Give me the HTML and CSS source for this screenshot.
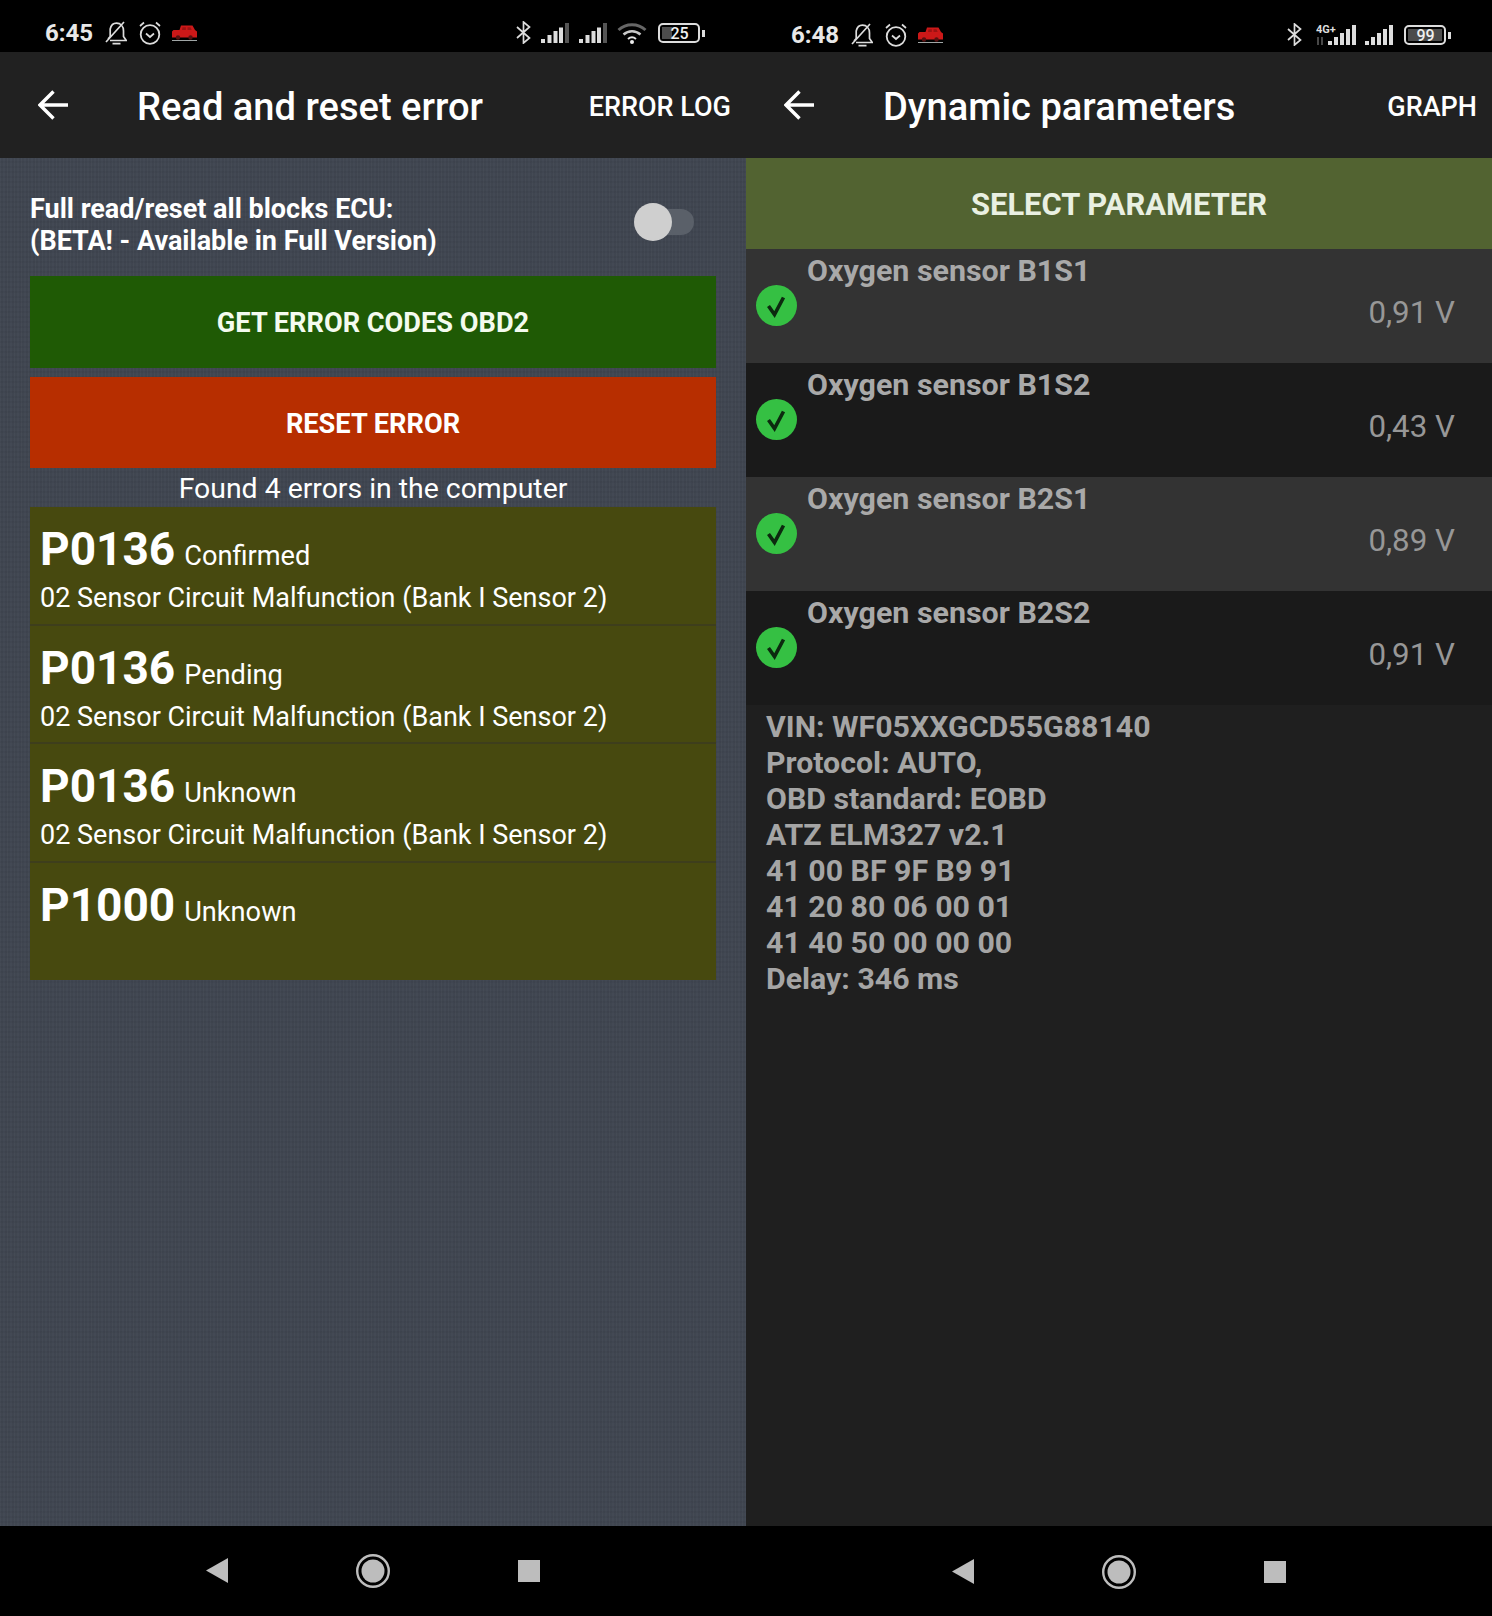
FILE: index.html
```html
<!DOCTYPE html>
<html lang="en">
<head>
<meta charset="utf-8">
<title>OBD screens</title>
<link rel="stylesheet" href="styles.css">
</head>
<body>
<svg class="sprite" aria-hidden="true">
  <symbol id="bell" viewBox="0 0 22 24"><path d="M1 21 19 1M5 19.500H21.300L18.500 15.500V10C18.500 5 15.500 2.200 11.500 2.200 8.500 2.200 6 4.500 5.200 8V15.500L3 18M7.500 22.700h8" fill="none" stroke="currentColor" stroke-width="1.700"/></symbol>
  <symbol id="alarm" viewBox="0 0 22 24"><circle cx="11" cy="13.500" r="9.300" fill="none" stroke="currentColor" stroke-width="1.800"/><path d="M7 12.500l4 3.500 4-3.500M1 5 5 1.500M21 5 17 1.500" fill="none" stroke="currentColor" stroke-width="1.700"/></symbol>
  <symbol id="car" viewBox="0 0 25 16"><path d="M0 6.500 1.500 5H7.500L9 .5h11.500L23 5l2 1.500V12.500H0z" fill="#cc1818"/><path d="M10.500 2.200h3.300v2.800H10zM15.500 2.200h3l1.200 2.800h-4.200z" fill="#9c1212"/><circle cx="6" cy="12.500" r="2.200" fill="#5a1010"/><circle cx="18.500" cy="12.500" r="2.200" fill="#5a1010"/><path d="M0 15.500h25" stroke="#a0a6a6" stroke-width="1"/></symbol>
  <symbol id="bt" viewBox="0 0 15 23"><path d="M1 6l12.500 11L7.500 22V1l6 5L1 17" fill="none" stroke="currentColor" stroke-width="1.700"/></symbol>
  <symbol id="wifi" viewBox="0 0 30 22"><path d="M1.500 8C9 1 21 1 28.500 8" fill="none" stroke="#666" stroke-width="3"/><path d="M6.500 12.500C11.500 8 18.500 8 23.500 12.500" fill="none" stroke="#c8c8c8" stroke-width="2.500"/><path d="M11 17c2.400-2 5.600-2 8 0" fill="none" stroke="#e4e4e4" stroke-width="2"/><circle cx="15" cy="20" r="2" fill="#eee"/></symbol>
</svg>

<main class="screens">
  <section class="screen screen-errors">
    <header class="status">
      <div class="status-left">
        <span class="time">6:45</span>
        <svg class="ic ic-bell"><use href="#bell"/></svg>
        <svg class="ic ic-alarm"><use href="#alarm"/></svg>
        <svg class="ic ic-car"><use href="#car"/></svg>
      </div>
      <div class="status-right">
        <svg class="ic ic-bt"><use href="#bt"/></svg>
        <svg class="ic ic-sig" viewBox="0 0 28 20"><rect x="0" y="16" width="4" height="4" fill="#ddd"/><rect x="6.500" y="12" width="4" height="8" fill="#ddd"/><rect x="12.500" y="8" width="4" height="12" fill="#ddd"/><rect x="18" y="4.500" width="4" height="15.500" fill="#ddd"/><rect x="24" y="0" width="4" height="20" fill="#555"/></svg>
        <svg class="ic ic-sig" viewBox="0 0 28 20"><rect x="0" y="16" width="4" height="4" fill="#ddd"/><rect x="6.500" y="12" width="4" height="8" fill="#ddd"/><rect x="12.500" y="8" width="4" height="12" fill="#ddd"/><rect x="18" y="4.500" width="4" height="15.500" fill="#ddd"/><rect x="24" y="0" width="4" height="20" fill="#555"/></svg>
        <svg class="ic ic-wifi"><use href="#wifi"/></svg>
        <svg class="ic ic-batt" viewBox="0 0 47 20"><rect x="1" y="1" width="40" height="18" rx="4" fill="none" stroke="#ddd" stroke-width="2"/><rect x="4" y="4" width="10" height="12" fill="#4c4c4c"/><rect x="44" y="7" width="3" height="7" fill="#ddd"/><text x="21.500" y="15.500" text-anchor="middle" class="batt-num">25</text></svg>
      </div>
    </header>
    <div class="appbar">
      <svg class="back" viewBox="0 0 31 30"><path d="M30 15H2.500M15.500 1.500 2 15l13.500 13.500" fill="none" stroke="#fff" stroke-width="3.400"/></svg>
      <h1 class="title">Read and reset error</h1>
      <span class="action">ERROR LOG</span>
    </div>
    <div class="content textured">
      <div class="toggle-row">
        <p class="toggle-label">Full read/reset all blocks ECU:<br>(BETA! - Available in Full Version)</p>
        <span class="switch"><span class="thumb"></span></span>
      </div>
      <button class="btn btn-green">GET ERROR CODES OBD2</button>
      <button class="btn btn-red">RESET ERROR</button>
      <p class="found">Found 4 errors in the computer</p>
      <ul class="errors">
        <li class="err"><div class="err-head"><b class="code">P0136</b> <span class="state">Confirmed</span></div><div class="desc">02 Sensor Circuit Malfunction (Bank I Sensor 2)</div></li>
        <li class="err"><div class="err-head"><b class="code">P0136</b> <span class="state">Pending</span></div><div class="desc">02 Sensor Circuit Malfunction (Bank I Sensor 2)</div></li>
        <li class="err"><div class="err-head"><b class="code">P0136</b> <span class="state">Unknown</span></div><div class="desc">02 Sensor Circuit Malfunction (Bank I Sensor 2)</div></li>
        <li class="err"><div class="err-head"><b class="code">P1000</b> <span class="state">Unknown</span></div></li>
      </ul>
    </div>
    <nav class="navbar">
      <svg class="nav-back" viewBox="0 0 22 25"><path d="M22 0v25L0 12.500z" fill="#bdbdbd"/></svg>
      <svg class="nav-home" viewBox="0 0 34 34"><circle cx="17" cy="17" r="15.800" fill="none" stroke="#bdbdbd" stroke-width="2.400"/><circle cx="17" cy="17" r="11.500" fill="#bdbdbd"/></svg>
      <span class="nav-square"></span>
    </nav>
  </section>

  <section class="screen screen-params">
    <header class="status status-low">
      <div class="status-left">
        <span class="time">6:48</span>
        <svg class="ic ic-bell"><use href="#bell"/></svg>
        <svg class="ic ic-alarm"><use href="#alarm"/></svg>
        <svg class="ic ic-car"><use href="#car"/></svg>
      </div>
      <div class="status-right">
        <svg class="ic ic-bt ic-bt-far"><use href="#bt"/></svg>
        <svg class="ic ic-sig4g" viewBox="0 0 40 22"><text x="0" y="9" class="net-num">4G+</text><path d="M2 13v8M6 13v8" stroke="#777" stroke-width="1.200"/><rect x="12" y="17" width="4" height="4" fill="#ddd"/><rect x="18" y="13" width="4" height="8" fill="#ddd"/><rect x="24" y="9" width="4" height="12" fill="#ddd"/><rect x="30" y="5" width="4" height="16" fill="#ddd"/><rect x="36" y="1" width="4" height="20" fill="#ddd"/></svg>
        <svg class="ic ic-sig" viewBox="0 0 28 20"><rect x="0" y="16" width="4" height="4" fill="#ddd"/><rect x="6" y="12" width="4" height="8" fill="#ddd"/><rect x="12" y="8" width="4" height="12" fill="#ddd"/><rect x="18" y="4" width="4" height="16" fill="#ddd"/><rect x="24" y="0" width="4" height="20" fill="#ddd"/></svg>
        <svg class="ic ic-batt" viewBox="0 0 47 20"><rect x="1" y="1" width="40" height="18" rx="4" fill="none" stroke="#ddd" stroke-width="2"/><rect x="4" y="4" width="34" height="12" fill="#4c4c4c"/><rect x="44" y="7" width="3" height="7" fill="#ddd"/><text x="21.500" y="15.500" text-anchor="middle" class="batt-num">99</text></svg>
      </div>
    </header>
    <div class="appbar">
      <svg class="back" viewBox="0 0 31 30"><path d="M30 15H2.500M15.500 1.500 2 15l13.500 13.500" fill="none" stroke="#fff" stroke-width="3.400"/></svg>
      <h1 class="title">Dynamic parameters</h1>
      <span class="action">GRAPH</span>
    </div>
    <div class="content plain">
      <div class="select">SELECT PARAMETER</div>
      <ul class="params">
        <li class="param"><svg class="check" viewBox="0 0 41 41"><circle cx="20.500" cy="20.500" r="20.500" fill="#35c043"/><path d="M12.500 21l6 8.500 9-17" fill="none" stroke="#0c2a0f" stroke-width="3.600"/></svg><div class="param-body"><div class="param-name">Oxygen sensor B1S1</div><div class="param-val">0,91 V</div></div></li>
        <li class="param"><svg class="check" viewBox="0 0 41 41"><circle cx="20.500" cy="20.500" r="20.500" fill="#35c043"/><path d="M12.500 21l6 8.500 9-17" fill="none" stroke="#0c2a0f" stroke-width="3.600"/></svg><div class="param-body"><div class="param-name">Oxygen sensor B1S2</div><div class="param-val">0,43 V</div></div></li>
        <li class="param"><svg class="check" viewBox="0 0 41 41"><circle cx="20.500" cy="20.500" r="20.500" fill="#35c043"/><path d="M12.500 21l6 8.500 9-17" fill="none" stroke="#0c2a0f" stroke-width="3.600"/></svg><div class="param-body"><div class="param-name">Oxygen sensor B2S1</div><div class="param-val">0,89 V</div></div></li>
        <li class="param"><svg class="check" viewBox="0 0 41 41"><circle cx="20.500" cy="20.500" r="20.500" fill="#35c043"/><path d="M12.500 21l6 8.500 9-17" fill="none" stroke="#0c2a0f" stroke-width="3.600"/></svg><div class="param-body"><div class="param-name">Oxygen sensor B2S2</div><div class="param-val">0,91 V</div></div></li>
      </ul>
      <p class="info">VIN: WF05XXGCD55G88140<br>Protocol: AUTO,<br>OBD standard: EOBD<br>ATZ ELM327 v2.1<br>41 00 BF 9F B9 91<br>41 20 80 06 00 01<br>41 40 50 00 00 00<br>Delay: 346 ms</p>
    </div>
    <nav class="navbar navbar-low">
      <svg class="nav-back" viewBox="0 0 22 25"><path d="M22 0v25L0 12.500z" fill="#bdbdbd"/></svg>
      <svg class="nav-home" viewBox="0 0 34 34"><circle cx="17" cy="17" r="15.800" fill="none" stroke="#bdbdbd" stroke-width="2.400"/><circle cx="17" cy="17" r="11.500" fill="#bdbdbd"/></svg>
      <span class="nav-square"></span>
    </nav>
  </section>
</main>
</body>
</html>
```
FILE: styles.css
```css
* { box-sizing: border-box; }
html, body { margin: 0; padding: 0; background: #000; }
body { font-family: Roboto, "Liberation Sans", sans-serif; color: #fff; }
p, h1, ul { margin: 0; padding: 0; }
ul { list-style: none; }
.sprite { width: 0; height: 0; position: absolute; }

.screens { display: flex; width: 1492px; height: 1616px; overflow: hidden; }
.screen { width: 746px; height: 1616px; display: flex; flex-direction: column; }

.status { height: 52px; background: #000; display: flex; align-items: center; justify-content: space-between; padding: 13px 41px 0 45px; flex: none; color: #ddd; }
.status-low { padding-top: 17px; }
.status-left, .status-right { display: flex; align-items: center; }
.time { font-size: 24px; font-weight: 700; color: #e8e8e8; width: 47px; line-height: 28px; white-space: nowrap; }
.ic { display: block; flex: none; }
.ic-bell { width: 22px; height: 24px; margin-left: 13px; }
.ic-alarm { width: 22px; height: 24px; margin-left: 12px; }
.ic-car { width: 25px; height: 16px; margin-left: 11px; }
.ic-bt { width: 15px; height: 23px; }
.ic-sig { width: 28px; height: 20px; margin-left: 10px; }
.ic-wifi { width: 30px; height: 22px; margin-left: 10px; }
.ic-batt { width: 47px; height: 20px; margin-left: 11px; }
.ic-sig4g { width: 40px; height: 22px; margin-left: 14px; }
.ic-sig4g + .ic-sig { margin-left: 9px; }
.batt-num { font: 500 16px Roboto, sans-serif; fill: #f0f0f0; }
.net-num { font: 700 11px Roboto, sans-serif; fill: #ddd; }

.appbar { height: 106px; background: #212121; display: flex; align-items: center; padding: 0 15px 0 38px; flex: none; }
.back { width: 31px; height: 30px; flex: none; }
.title { font-size: 38.100px; font-weight: 500; line-height: 44px; margin-left: 68px; margin-top: 4px; flex: 1; white-space: nowrap; }
.action { font-size: 27px; font-weight: 500; line-height: 32px; margin-top: 4px; white-space: nowrap; }

.content { flex: 1; min-height: 0; }
.textured {
  padding: 34px 30px 0 30px;
  background-color: #3f4550;
  background-image:
    repeating-linear-gradient(90deg, rgba(255,255,255,.018) 0 1px, rgba(0,0,0,.02) 1px 3px, rgba(255,255,255,.01) 3px 5px, rgba(0,0,0,.025) 5px 7px),
    repeating-linear-gradient(0deg, rgba(255,255,255,.012) 0 3px, rgba(0,0,0,.012) 3px 5px);
}
.plain { background: #1f1f1f; }

.toggle-row { display: flex; justify-content: space-between; align-items: flex-start; height: 84px; }
.toggle-label { font-size: 27px; font-weight: 700; line-height: 32px; margin-top: 1px; white-space: nowrap; }
.switch { position: relative; display: block; width: 60px; height: 26px; margin: 17px 22px 0 0; background: #5a6069; border-radius: 13px; }
.thumb { position: absolute; left: 0; top: -6px; width: 38px; height: 38px; border-radius: 50%; background: #cfcfcf; }

.btn { display: block; width: 100%; border: 0; color: #f4fbef; font: 700 27.200px/32px Roboto, sans-serif; padding: 2px 0 0; }
.btn-green { height: 92px; background: #1f5a05; margin-bottom: 9px; }
.btn-red { height: 91px; background: #b72e00; color: #fff; }
.found { height: 39px; line-height: 42px; font-size: 28.400px; text-align: center; white-space: nowrap; }

.errors { background: #47490f; }
.err { height: 118.500px; padding: 12px 10px 0; border-bottom: 2px solid #3e3e1c; }
.err:last-child { border-bottom: 0; height: 117.500px; }
.err-head { height: 61px; line-height: 61px; white-space: nowrap; }
.code { font-size: 46px; font-weight: 700; }
.state { font-size: 27.200px; margin-left: 5px; }
.desc { font-size: 27px; line-height: 36px; white-space: nowrap; }

.select { height: 91px; background: #526331; color: #e9f0e2; font-size: 30.900px; font-weight: 700; line-height: 93px; text-align: center; }
.param { height: 114px; display: flex; align-items: center; padding-left: 10px; background: #1a1a1a; }
.param:nth-child(odd) { background: #333333; }
.check { width: 41px; height: 41px; flex: none; margin-top: -1px; }
.param-body { flex: 1; align-self: stretch; padding-right: 37px; margin-left: 10px; }
.param-name { font-size: 30.400px; font-weight: 700; line-height: 44px; color: #a9a9a9; white-space: nowrap; }
.param-val { font-size: 31.300px; line-height: 40px; color: #979797; text-align: right; }
.info { padding: 4px 0 0 20px; font-size: 30.300px; font-weight: 700; line-height: 36px; color: #a5a5a5; white-space: nowrap; }

.navbar { height: 90px; flex: none; background: #000; display: flex; align-items: center; justify-content: center; gap: 128px; padding-right: 1px; }
.navbar-low { padding-top: 2px; }
.nav-back { width: 22px; height: 25px; margin-top: -1px; flex: none; }
.nav-home { width: 34px; height: 34px; flex: none; }
.nav-square { display: block; width: 22px; height: 22px; background: #bdbdbd; flex: none; }
```
